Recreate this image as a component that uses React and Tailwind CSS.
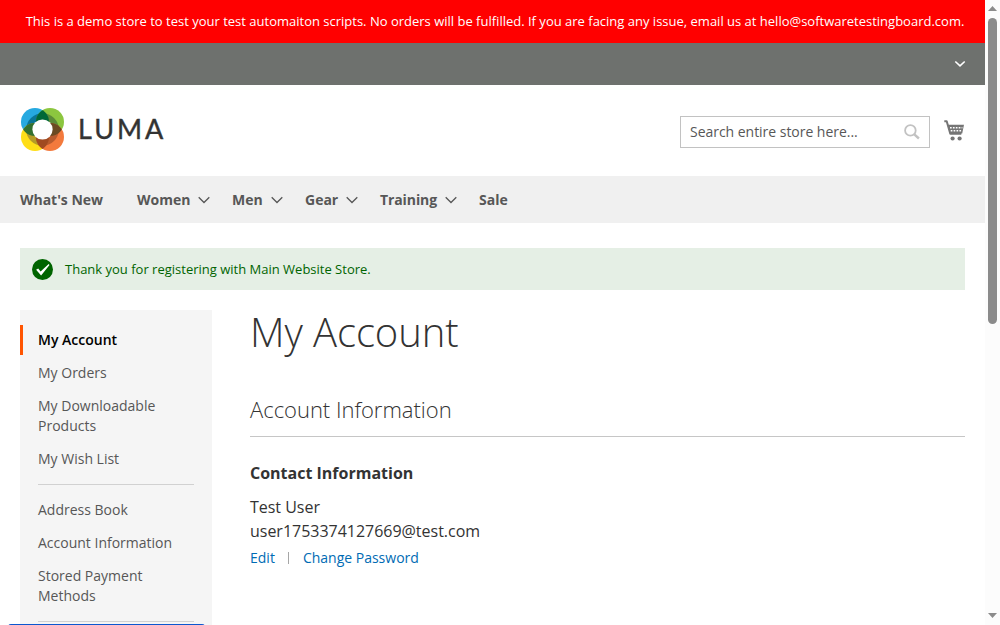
import React from 'react';

function LumaMark() {
  return (
    <svg className="block h-[44px] w-[44px]" viewBox="-22.5 -22.5 44 44" aria-hidden="true">
      <defs>
        <clipPath id="tl"><circle cx="-7.5" cy="-7.5" r="14" /></clipPath>
        <clipPath id="tr"><circle cx="7.5" cy="-7.5" r="14" /></clipPath>
        <clipPath id="bl"><circle cx="-7.5" cy="7.5" r="14" /></clipPath>
        <clipPath id="br"><circle cx="7.5" cy="7.5" r="14" /></clipPath>
      </defs>
      <circle cx="-7.5" cy="-7.5" r="14" fill="#26a9e0" />
      <circle cx="7.5" cy="-7.5" r="14" fill="#8cc63f" />
      <circle cx="-7.5" cy="7.5" r="14" fill="#ffde17" />
      <circle cx="7.5" cy="7.5" r="14" fill="#f37a3d" />
      <circle r="16.3" fill="#0a7596" clipPath="url(#tl)" />
      <circle r="16.3" fill="#5b8a38" clipPath="url(#tr)" />
      <circle r="16.3" fill="#b59b26" clipPath="url(#bl)" />
      <circle r="16.3" fill="#b85b2e" clipPath="url(#br)" />
      <g clipPath="url(#tl)">
        <circle cx="7.5" cy="-7.5" r="14" fill="#006837" />
        <circle cx="-7.5" cy="7.5" r="14" fill="#33702f" />
      </g>
      <g clipPath="url(#br)">
        <circle cx="7.5" cy="-7.5" r="14" fill="#6b4a22" />
        <circle cx="-7.5" cy="7.5" r="14" fill="#a04a21" />
      </g>
      <circle r="10.1" fill="#fff" />
    </svg>
  );
}

function Chevron({ className }) {
  return (
    <svg className={className} viewBox="0 0 12 8" fill="none" stroke="currentColor" strokeWidth="1.3" aria-hidden="true">
      <path d="M.7 1.2 6 6.5l5.3-5.3" />
    </svg>
  );
}

function Cart() {
  return (
    <svg className="block h-[22px] w-[21px]" viewBox="0 0 21 22" fill="none" aria-hidden="true">
      <path d="M.3 1.3h2.4l3.6 12.4h11" stroke="#757575" strokeWidth="2" strokeLinejoin="round" />
      <path d="M3.7 4.8h16.3l-1.8 8.8H6z" fill="#757575" />
      <path d="M6 7.7h12.4M6.7 10.7h11" stroke="#fff" strokeWidth="1.4" strokeDasharray="1.7 1.2" />
      <circle cx="8.6" cy="18.5" r="2.1" fill="#757575" />
      <circle cx="15.6" cy="18.5" r="2.1" fill="#757575" />
    </svg>
  );
}

function NavItem({ label, menu, className }) {
  return (
    <a className={`flex items-center ${className}`}>
      {label}
      {menu && <Chevron className="ml-2 mt-px h-2 w-3" />}
    </a>
  );
}

function SideLink({ children }) {
  return <a className="block py-[6.5px] pl-[18px] pr-[30px] leading-5">{children}</a>;
}

export default function App() {
  return (
    <div className="flex h-[625px] w-[1000px] overflow-hidden bg-white font-['Open_Sans',sans-serif] text-sm text-[#333]">
      <div className="relative h-full w-[985px] overflow-hidden">
        <div className="flex h-[43px] items-center justify-center whitespace-nowrap bg-[#f00] pl-[5px] text-[13px] text-white">
          This is a demo store to test your test automaiton scripts. No orders will be fulfilled. If you are facing any issue, email us at hello@softwaretestingboard.com.
        </div>
        <div className="flex h-[42px] items-center justify-end bg-[#6e716e] pr-[19px] text-white">
          <svg className="h-2 w-[12px]" viewBox="0 0 12 8" fill="none" stroke="currentColor" strokeWidth="1.6"><path d="m1.3 1.5 4.7 4.4 4.7-4.4" /></svg>
        </div>

        <header className="flex h-[91px] items-center px-5">
          <div className="mb-[3px] flex items-center">
            <LumaMark />
            <span className="ml-[14px] font-['Lato',sans-serif] text-[27px] leading-[44px] tracking-[3px] text-[#333] [-webkit-text-stroke:.4px_#333]">LUMA</span>
          </div>
          <div className="ml-auto mt-[3px] flex h-8 w-[250px] items-center justify-between border border-[#c2c2c2] pl-[9px] pr-[9px] text-[#575757]">
            <span className="tracking-[-.03px]">Search entire store here...</span>
            <svg className="h-4 w-4" viewBox="0 0 16 16" fill="none" stroke="#c2c2c2" strokeWidth="1.8"><circle cx="6.4" cy="6.4" r="5.3" /><path d="m10.3 10.3 4.6 4.2" strokeWidth="2.4" /></svg>
          </div>
          <div className="ml-[14px] mt-px"><Cart /></div>
        </header>

        <nav className="flex h-[47px] items-center bg-[#f0f0f0] px-5 font-bold text-[#575757]">
          <NavItem label="What's New" className="w-[117px] tracking-[-.03px]" />
          <NavItem label="Women" menu className="w-[95px]" />
          <NavItem label="Men" menu className="w-[73px]" />
          <NavItem label="Gear" menu className="w-[75px]" />
          <NavItem label="Training" menu className="w-[99px] tracking-[-.1px]" />
          <NavItem label="Sale" className="" />
        </nav>

        <div className="mx-5 mt-[25px] flex h-[42px] items-center bg-[#e5efe5] pl-3 text-[13px] text-[#006400]">
          <svg className="mr-3 h-[21px] w-[21px]" viewBox="0 0 21 21" aria-hidden="true">
            <circle cx="10.5" cy="10.5" r="10.5" fill="#006400" />
            <path d="m4.1 10.7 2.1-1.2 2.4 2.9 8.1-7.5.8 1.1-8.4 10.6z" fill="#fff" />
          </svg>
          Thank you for registering with Main Website Store.
        </div>

        <div className="mt-5 flex px-5">
          <aside className="h-[400px] w-[192px] shrink-0 bg-[#f5f5f5] pt-[15px] text-[#575757]">
            <div className="mb-[1.5px] flex h-[30px] items-center border-l-[3px] border-[#ff5501] pl-[15px] font-semibold text-black">My Account</div>
            <SideLink>My Orders</SideLink>
            <SideLink>My Downloadable Products</SideLink>
            <SideLink>My Wish List</SideLink>
            <hr className="mx-[18px] mb-[9px] mt-[8px] border-[#d1d1d1]" />
            <SideLink>Address Book</SideLink>
            <SideLink>Account Information</SideLink>
            <SideLink>Stored Payment Methods</SideLink>
            <hr className="mx-[18px] mt-[8px] border-[#d1d1d1]" />
          </aside>

          <main className="ml-[38px] flex-1">
            <h1 className="h-[44px] text-[40px] font-light leading-[44px] tracking-[-.08px]">My Account</h1>
            <h2 className="mt-[33px] h-[50px] border-b border-[#c6c6c6] text-[22px] font-light leading-[44px] tracking-[-.02px]">Account Information</h2>
            <h3 className="mt-[24px] text-base font-bold leading-6">Contact Information</h3>
            <p className="mt-[10px] text-base leading-6 tracking-[-.02px]">Test User<br />user1753374127669@test.com</p>
            <div className="mt-[5px] flex items-center leading-5 text-[#006bb4]">
              <a>Edit</a>
              <span className="ml-[13px] mr-[14px] h-3 w-px bg-[#a6a6a6]" />
              <a>Change Password</a>
            </div>
          </main>
        </div>
        <div className="absolute left-[8px] top-[624px] h-8 w-[197px] rounded-t-[3px] bg-[#0b57d0]" />
      </div>

      <div className="flex h-full w-[15px] flex-col items-center bg-[#fcfcfc]">
        <svg className="mt-[6px] h-[5px] w-[9px]" viewBox="0 0 9 5"><path d="M0 5 4.5 0 9 5z" fill="#8b8b8b" /></svg>
        <div className="mt-[7px] h-[306px] w-[9px] rounded-full bg-[#8b8b8b]" />
        <svg className="mb-[7px] mt-auto h-[5px] w-[9px]" viewBox="0 0 9 5"><path d="M0 0h9L4.5 5z" fill="#8b8b8b" /></svg>
      </div>
    </div>
  );
}
